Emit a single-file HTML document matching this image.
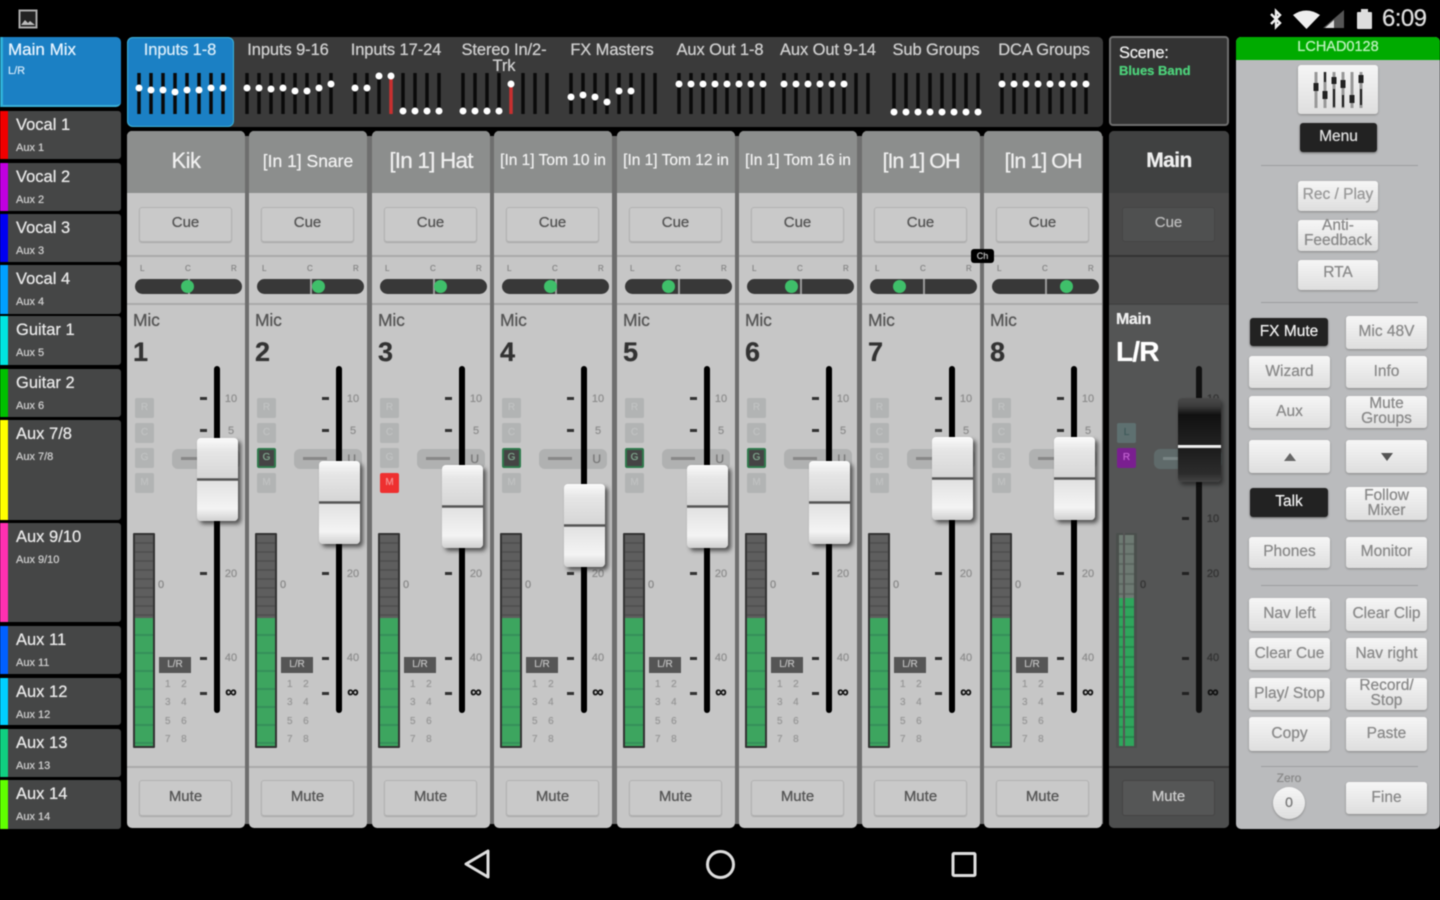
<!DOCTYPE html>
<html><head><meta charset="utf-8"><title>Mixer</title>
<style>
html,body{margin:0;padding:0;background:#000}
#r{position:relative;width:1440px;height:900px;overflow:hidden;background:#000;font-family:"Liberation Sans",sans-serif;filter:blur(.55px);text-shadow:0 0 .7px currentColor}
#r div,#r svg,#r span.a{position:absolute}
.si{left:0;width:121px;background:#454646;border-radius:0 3px 3px 0;overflow:hidden;color:#ddd}
.si i{position:absolute;left:0;top:0;bottom:0;width:8px}
.si b{position:absolute;left:16px;top:4px;font:16.5px/20px "Liberation Sans",sans-serif;color:#e8e8e8;white-space:nowrap}
.si s{position:absolute;left:16px;top:30px;font:11px/14px "Liberation Sans",sans-serif;color:#ccc;text-decoration:none;white-space:nowrap}
.nl{top:42px;width:108px;text-align:center;font-size:16.5px;line-height:16px;color:#cfcfcf;white-space:nowrap;letter-spacing:-.1px}
.ch{top:131px;width:118px;height:697px;background:#c6c6c6;border-radius:5px;overflow:hidden}
.nm{left:0;top:0;width:118px;height:62px;background:#8c8e8d;color:#f0f0f0;text-align:center;line-height:60px;white-space:nowrap}
.big{font-size:22.5px;letter-spacing:-.8px}
.oh{font-size:21.5px;letter-spacing:-1px}
.bt{left:12px;width:93px;height:35px;background:#c9c9c9;border:1px solid #b2b2b2;box-sizing:border-box;border-radius:3px;text-align:center;line-height:30px;font-size:15px;color:#555;box-shadow:0 1px 1px #aaa}
.ln{left:0;width:118px;height:2px;background:#aaa}
.lc{top:133px;font-size:8px;line-height:10px;color:#888}
.pan{left:8px;top:148px;width:107px;height:15px;background:#383838;border-radius:8px}
.dv{left:53px;top:0;width:2px;height:15px;background:#999}
.kn{top:149px;width:13px;height:13px;border-radius:50%;background:#3fbf6a}
.ty{left:6px;top:179px;font-size:17.5px;line-height:20px;color:#555;letter-spacing:-.2px}
.no{left:6px;top:205px;font-size:27px;line-height:32px;color:#333;font-weight:bold}
.tr{left:87px;top:235px;width:6px;height:347px;background:#000;border-radius:3px}
.t{left:73px;width:7px;height:3px;background:#333}
.v{left:94px;width:20px;font-size:11px;line-height:12px;color:#8f8f8f;text-align:center}
.f{top:555px;font-size:16px;line-height:14px;color:#111;font-weight:bold}
.sb{left:8px;width:19px;height:20px;background:#b2b4b4;border-radius:2px;text-align:center;font-size:10px;line-height:20px;color:#c0c2c2}
.gr{top:317px;background:#444;color:#7fa58c;border:2px solid #2f7a4c;box-sizing:border-box;line-height:16px}
.pl{left:45px;top:318px;width:68px;height:20px;background:#b0b1b1;border-radius:6px}
.pl i{position:absolute;left:9px;top:8px;width:24px;height:3px;background:#888}
.pl u{position:absolute;right:6px;top:3px;font-size:12px;line-height:14px;color:#777;text-decoration:none}
.cap{left:70px;width:41px;height:83px;border-radius:4px;background:linear-gradient(#fbfbfb,#e6e6e6 16%,#d6d6d6 48%,#555 49%,#555 51%,#e2e2e2 52%,#f4f4f4 85%,#d0d0d0);box-shadow:3px 3px 4px rgba(0,0,0,.6)}
.mt{left:6px;top:402px;width:22px;height:215px;background:#333;border-radius:1px}
.mt i{position:absolute;left:2px;right:2px;top:2px;height:83px;background:repeating-linear-gradient(#5e5e5e 0,#5e5e5e 7px,#525252 7px,#525252 9px)}
.mt b{position:absolute;left:2px;right:2px;top:85px;bottom:2px;background:repeating-linear-gradient(#3da55f 0,#3da55f 16px,#35905a 16px,#35905a 18px)}
.z{left:31px;top:448px;font-size:11px;line-height:12px;color:#888}
.lr{left:32px;top:526px;width:32px;height:16px;background:#555;color:#bbb;font-size:10px;line-height:16px;text-align:center}
.nn{left:38px;top:545px;width:32px;font-size:10px;line-height:18.3px;color:#999;white-space:pre;word-spacing:2.5px}
.rb{background:linear-gradient(#f6f6f6,#dedede);border-radius:3px;box-shadow:0 1px 2px #888;color:#8a8a8a;font-size:15.5px;line-height:15px;text-align:center;display:flex;align-items:center;justify-content:center;width:81px;box-sizing:border-box;padding-bottom:2px}
.d{background:#222;color:#eee;box-shadow:0 1px 2px #666}
.c2{left:1346px}.c1{left:1249px}
.sp{left:1261px;width:157px;height:1px;background:#9d9ea0}
</style></head><body>
<div id="r">

<!-- status bar -->
<svg style="left:18px;top:9px" width="20" height="20" viewBox="0 0 20 20"><rect x="1.5" y="1.5" width="17" height="17" fill="#222" stroke="#aaa" stroke-width="2"/><path d="M3 16l4-5 3 3 2-2 5 4z" fill="#bbb"/></svg>
<svg style="left:1268px;top:8px" width="170" height="22" viewBox="0 0 170 22"><path d="M3 6l9 9-4 4V3l4 4-9 9" fill="none" stroke="#eee" stroke-width="2.4"/><path d="M25 7q13-9 27 0L38.500 21z" fill="#eee"/><path d="M55 20L76 2v18z" fill="#555"/><path d="M57 20L66 12v8z" fill="#ddd"/><rect x="89" y="4" width="15" height="17" rx="1" fill="#ddd"/><rect x="93" y="1" width="7" height="3" fill="#ddd"/></svg>
<div style="left:1382px;top:5px;font-size:24px;line-height:28px;color:#ddd;letter-spacing:-.6px">6:09</div>

<!-- sidebar -->
<div style="left:0;top:37px;width:121px;height:70px;background:#1b80c4;border-radius:0 5px 5px 0;border-bottom:2px solid #3bb0d8;box-sizing:border-box"></div>
<div style="left:0;top:37px;width:3px;height:70px;background:#2fb0d8"></div>
<div style="left:8px;top:40px;font-size:17px;line-height:20px;color:#e8f4ff">Main Mix</div>
<div style="left:8px;top:64px;font-size:11px;line-height:14px;color:#cfe6f8">L/R</div>
<div class="si" style="top:111px;height:48px"><i style="background:#f00000"></i><b>Vocal 1</b><s>Aux 1</s></div>
<div class="si" style="top:163px;height:48px"><i style="background:#c000e0"></i><b>Vocal 2</b><s>Aux 2</s></div>
<div class="si" style="top:214px;height:48px"><i style="background:#0000f0"></i><b>Vocal 3</b><s>Aux 3</s></div>
<div class="si" style="top:265px;height:49px"><i style="background:#00a0ff"></i><b>Vocal 4</b><s>Aux 4</s></div>
<div class="si" style="top:316px;height:49px"><i style="background:#00e4e0"></i><b>Guitar 1</b><s>Aux 5</s></div>
<div class="si" style="top:369px;height:48px"><i style="background:#00c000"></i><b>Guitar 2</b><s>Aux 6</s></div>
<div class="si" style="top:420px;height:100px"><i style="background:#ffff00"></i><b>Aux 7/8</b><s>Aux 7/8</s></div>
<div class="si" style="top:523px;height:99px"><i style="background:#ff30b0"></i><b>Aux 9/10</b><s>Aux 9/10</s></div>
<div class="si" style="top:626px;height:48px"><i style="background:#0060ff"></i><b>Aux 11</b><s>Aux 11</s></div>
<div class="si" style="top:678px;height:47px"><i style="background:#00d0ff"></i><b>Aux 12</b><s>Aux 12</s></div>
<div class="si" style="top:729px;height:48px"><i style="background:#10d080"></i><b>Aux 13</b><s>Aux 13</s></div>
<div class="si" style="top:780px;height:49px"><i style="background:#60ff00"></i><b>Aux 14</b><s>Aux 14</s></div>

<!-- nav strip -->
<div style="left:127px;top:37px;width:976px;height:90px;background:#3a3a3a;border-radius:5px"></div>
<div style="left:127px;top:37px;width:107px;height:90px;background:#1b80c4;border-radius:6px;border:1px solid #3bb0d8;box-sizing:border-box"></div>
<div class="nl" style="left:126px;color:#d8ecfa">Inputs 1-8</div>
<div class="nl" style="left:234px">Inputs 9-16</div>
<div class="nl" style="left:342px">Inputs 17-24</div>
<div class="nl" style="left:450px">Stereo In/2-<br>Trk</div>
<div class="nl" style="left:558px">FX Masters</div>
<div class="nl" style="left:666px">Aux Out 1-8</div>
<div class="nl" style="left:774px">Aux Out 9-14</div>
<div class="nl" style="left:882px">Sub Groups</div>
<div class="nl" style="left:990px">DCA Groups</div>
<svg style="left:0;top:0" width="1110" height="130" viewBox="0 0 1110 130">
<path stroke="#0a0a0a" stroke-width="3.500" fill="none" d="M139 73v41M151 73v41M163 73v41M175 73v41M187 73v41M199 73v41M211 73v41M223 73v41M247 73v41M259 73v41M271 73v41M283 73v41M295 73v41M307 73v41M319 73v41M331 73v41M355 73v41M367 73v41M379 73v41M403 73v41M415 73v41M427 73v41M439 73v41M463 73v41M475 73v41M487 73v41M499 73v41M523 73v41M535 73v41M547 73v41M571 73v41M583 73v41M595 73v41M607 73v41M619 73v41M631 73v41M643 73v41M655 73v41M679 73v41M691 73v41M703 73v41M715 73v41M727 73v41M739 73v41M751 73v41M763 73v41M784 73v41M796 73v41M808 73v41M820 73v41M832 73v41M844 73v41M856 73v41M868 73v41M894 73v41M906 73v41M918 73v41M930 73v41M942 73v41M954 73v41M966 73v41M978 73v41M1002 73v41M1014 73v41M1026 73v41M1038 73v41M1050 73v41M1062 73v41M1074 73v41M1086 73v41"/>
<path stroke="#c83030" stroke-width="3.500" fill="none" d="M391 76v38M511 84v30"/>
<g fill="#fff">
<circle cx="139" cy="88" r="3.500"/><circle cx="151" cy="90" r="3.500"/><circle cx="163" cy="90" r="3.500"/><circle cx="175" cy="92" r="3.500"/><circle cx="187" cy="90" r="3.500"/><circle cx="199" cy="90" r="3.500"/><circle cx="211" cy="88" r="3.500"/><circle cx="223" cy="88" r="3.500"/>
<circle cx="247" cy="88" r="3.500"/><circle cx="259" cy="88" r="3.500"/><circle cx="271" cy="89" r="3.500"/><circle cx="283" cy="88" r="3.500"/><circle cx="295" cy="91" r="3.500"/><circle cx="307" cy="91" r="3.500"/><circle cx="319" cy="88" r="3.500"/><circle cx="331" cy="84" r="3.500"/>
<circle cx="355" cy="88" r="3.500"/><circle cx="367" cy="88" r="3.500"/><circle cx="379" cy="76" r="3.500"/><circle cx="391" cy="76" r="3.500"/><circle cx="403" cy="111" r="3.500"/><circle cx="415" cy="111" r="3.500"/><circle cx="427" cy="111" r="3.500"/><circle cx="439" cy="111" r="3.500"/>
<circle cx="463" cy="111" r="3.500"/><circle cx="475" cy="111" r="3.500"/><circle cx="487" cy="111" r="3.500"/><circle cx="499" cy="111" r="3.500"/><circle cx="511" cy="84" r="3.500"/>
<circle cx="571" cy="97" r="3.500"/><circle cx="583" cy="95" r="3.500"/><circle cx="595" cy="97" r="3.500"/><circle cx="607" cy="102" r="3.500"/><circle cx="619" cy="91" r="3.500"/><circle cx="631" cy="91" r="3.500"/>
<circle cx="679" cy="84" r="3.500"/><circle cx="691" cy="84" r="3.500"/><circle cx="703" cy="84" r="3.500"/><circle cx="715" cy="84" r="3.500"/><circle cx="727" cy="84" r="3.500"/><circle cx="739" cy="84" r="3.500"/><circle cx="751" cy="84" r="3.500"/><circle cx="763" cy="84" r="3.500"/>
<circle cx="784" cy="84" r="3.500"/><circle cx="796" cy="84" r="3.500"/><circle cx="808" cy="84" r="3.500"/><circle cx="820" cy="84" r="3.500"/><circle cx="832" cy="84" r="3.500"/><circle cx="844" cy="84" r="3.500"/>
<circle cx="894" cy="112" r="3.500"/><circle cx="906" cy="112" r="3.500"/><circle cx="918" cy="112" r="3.500"/><circle cx="930" cy="112" r="3.500"/><circle cx="942" cy="112" r="3.500"/><circle cx="954" cy="112" r="3.500"/><circle cx="966" cy="112" r="3.500"/><circle cx="978" cy="112" r="3.500"/>
<circle cx="1002" cy="84" r="3.500"/><circle cx="1014" cy="84" r="3.500"/><circle cx="1026" cy="84" r="3.500"/><circle cx="1038" cy="84" r="3.500"/><circle cx="1050" cy="84" r="3.500"/><circle cx="1062" cy="84" r="3.500"/><circle cx="1074" cy="84" r="3.500"/><circle cx="1086" cy="84" r="3.500"/>
</g></svg>

<!-- scene -->
<div style="left:1109px;top:36px;width:120px;height:90px;background:#333;border:2px solid #6e6e6e;border-radius:4px;box-sizing:border-box"></div>
<div style="left:1119px;top:44px;font-size:16.5px;line-height:18px;color:#eee;letter-spacing:-.3px">Scene:</div>
<div style="left:1119px;top:64px;font-size:13px;line-height:14px;font-weight:bold;color:#4dd07a">Blues Band</div>

<!-- divider between strips -->
<div style="left:245px;top:136px;width:858px;height:688px;background:#6e6e6e"></div>

<!-- channel 1 -->
<div class="ch" style="left:127px">
<div class="nm" style="font-size:22px;letter-spacing:-.5px">Kik</div><div class="bt" style="top:76px">Cue</div><div class="ln" style="top:124px"></div><div class="ln" style="top:172px"></div>
<div class="lc" style="left:13px">L</div><div class="lc" style="left:58px">C</div><div class="lc" style="left:104px">R</div>
<div class="pan"><div class="dv"></div></div><div class="kn" style="left:54px"></div>
<div class="ty">Mic</div><div class="no">1</div>
<div class="sb" style="top:267px">R</div><div class="sb" style="top:292px">C</div><div class="sb" style="top:317px">G</div><div class="sb" style="top:342px">M</div>
<div class="pl"><i></i><u>U</u></div><div class="tr"></div>
<div class="t" style="top:266px"></div><div class="t" style="top:298px"></div><div class="t" style="top:441px"></div><div class="t" style="top:526px"></div><div class="t" style="top:561px"></div>
<div class="v" style="top:262px">10</div><div class="v" style="top:294px">5</div><div class="v" style="top:437px">20</div><div class="v" style="top:521px">40</div><div class="v f">∞</div>
<div class="cap" style="top:307px"></div>
<div class="mt"><i></i><b></b></div><div class="z">0</div><div class="lr">L/R</div><div class="nn">1  2
3  4
5  6
7  8</div>
<div class="ln" style="top:635px"></div><div class="bt" style="top:649px;height:36px;line-height:32px">Mute</div>
</div>

<!-- channel 2 -->
<div class="ch" style="left:249px">
<div class="nm" style="font-size:17.500px">[In 1] Snare</div><div class="bt" style="top:76px">Cue</div><div class="ln" style="top:124px"></div><div class="ln" style="top:172px"></div>
<div class="lc" style="left:13px">L</div><div class="lc" style="left:58px">C</div><div class="lc" style="left:104px">R</div>
<div class="pan"><div class="dv"></div></div><div class="kn" style="left:63px"></div>
<div class="ty">Mic</div><div class="no">2</div>
<div class="sb" style="top:267px">R</div><div class="sb" style="top:292px">C</div><div class="sb gr">G</div><div class="sb" style="top:342px">M</div>
<div class="pl"><i></i><u>U</u></div><div class="tr"></div>
<div class="t" style="top:266px"></div><div class="t" style="top:298px"></div><div class="t" style="top:441px"></div><div class="t" style="top:526px"></div><div class="t" style="top:561px"></div>
<div class="v" style="top:262px">10</div><div class="v" style="top:294px">5</div><div class="v" style="top:437px">20</div><div class="v" style="top:521px">40</div><div class="v f">∞</div>
<div class="cap" style="top:330px"></div>
<div class="mt"><i></i><b></b></div><div class="z">0</div><div class="lr">L/R</div><div class="nn">1  2
3  4
5  6
7  8</div>
<div class="ln" style="top:635px"></div><div class="bt" style="top:649px;height:36px;line-height:32px">Mute</div>
</div>

<!-- channel 3 -->
<div class="ch" style="left:372px">
<div class="nm big">[In 1] Hat</div><div class="bt" style="top:76px">Cue</div><div class="ln" style="top:124px"></div><div class="ln" style="top:172px"></div>
<div class="lc" style="left:13px">L</div><div class="lc" style="left:58px">C</div><div class="lc" style="left:104px">R</div>
<div class="pan"><div class="dv"></div></div><div class="kn" style="left:62px"></div>
<div class="ty">Mic</div><div class="no">3</div>
<div class="sb" style="top:267px">R</div><div class="sb" style="top:292px">C</div><div class="sb" style="top:317px">G</div><div class="sb" style="top:342px;background:#ee3030;color:#f59090">M</div>
<div class="pl"><i></i><u>U</u></div><div class="tr"></div>
<div class="t" style="top:266px"></div><div class="t" style="top:298px"></div><div class="t" style="top:441px"></div><div class="t" style="top:526px"></div><div class="t" style="top:561px"></div>
<div class="v" style="top:262px">10</div><div class="v" style="top:294px">5</div><div class="v" style="top:437px">20</div><div class="v" style="top:521px">40</div><div class="v f">∞</div>
<div class="cap" style="top:334px"></div>
<div class="mt"><i></i><b></b></div><div class="z">0</div><div class="lr">L/R</div><div class="nn">1  2
3  4
5  6
7  8</div>
<div class="ln" style="top:635px"></div><div class="bt" style="top:649px;height:36px;line-height:32px">Mute</div>
</div>

<!-- channel 4 -->
<div class="ch" style="left:494px">
<div class="nm" style="font-size:15.500px">[In 1] Tom 10 in</div><div class="bt" style="top:76px">Cue</div><div class="ln" style="top:124px"></div><div class="ln" style="top:172px"></div>
<div class="lc" style="left:13px">L</div><div class="lc" style="left:58px">C</div><div class="lc" style="left:104px">R</div>
<div class="pan"><div class="dv"></div></div><div class="kn" style="left:50px"></div>
<div class="ty">Mic</div><div class="no">4</div>
<div class="sb" style="top:267px">R</div><div class="sb" style="top:292px">C</div><div class="sb gr">G</div><div class="sb" style="top:342px">M</div>
<div class="pl"><i></i><u>U</u></div><div class="tr"></div>
<div class="t" style="top:266px"></div><div class="t" style="top:298px"></div><div class="t" style="top:441px"></div><div class="t" style="top:526px"></div><div class="t" style="top:561px"></div>
<div class="v" style="top:262px">10</div><div class="v" style="top:294px">5</div><div class="v" style="top:437px">20</div><div class="v" style="top:521px">40</div><div class="v f">∞</div>
<div class="cap" style="top:353px"></div>
<div class="mt"><i></i><b></b></div><div class="z">0</div><div class="lr">L/R</div><div class="nn">1  2
3  4
5  6
7  8</div>
<div class="ln" style="top:635px"></div><div class="bt" style="top:649px;height:36px;line-height:32px">Mute</div>
</div>

<!-- channel 5 -->
<div class="ch" style="left:617px">
<div class="nm" style="font-size:15.500px">[In 1] Tom 12 in</div><div class="bt" style="top:76px">Cue</div><div class="ln" style="top:124px"></div><div class="ln" style="top:172px"></div>
<div class="lc" style="left:13px">L</div><div class="lc" style="left:58px">C</div><div class="lc" style="left:104px">R</div>
<div class="pan"><div class="dv"></div></div><div class="kn" style="left:45px"></div>
<div class="ty">Mic</div><div class="no">5</div>
<div class="sb" style="top:267px">R</div><div class="sb" style="top:292px">C</div><div class="sb gr">G</div><div class="sb" style="top:342px">M</div>
<div class="pl"><i></i><u>U</u></div><div class="tr"></div>
<div class="t" style="top:266px"></div><div class="t" style="top:298px"></div><div class="t" style="top:441px"></div><div class="t" style="top:526px"></div><div class="t" style="top:561px"></div>
<div class="v" style="top:262px">10</div><div class="v" style="top:294px">5</div><div class="v" style="top:437px">20</div><div class="v" style="top:521px">40</div><div class="v f">∞</div>
<div class="cap" style="top:334px"></div>
<div class="mt"><i></i><b></b></div><div class="z">0</div><div class="lr">L/R</div><div class="nn">1  2
3  4
5  6
7  8</div>
<div class="ln" style="top:635px"></div><div class="bt" style="top:649px;height:36px;line-height:32px">Mute</div>
</div>

<!-- channel 6 -->
<div class="ch" style="left:739px">
<div class="nm" style="font-size:15.500px">[In 1] Tom 16 in</div><div class="bt" style="top:76px">Cue</div><div class="ln" style="top:124px"></div><div class="ln" style="top:172px"></div>
<div class="lc" style="left:13px">L</div><div class="lc" style="left:58px">C</div><div class="lc" style="left:104px">R</div>
<div class="pan"><div class="dv"></div></div><div class="kn" style="left:46px"></div>
<div class="ty">Mic</div><div class="no">6</div>
<div class="sb" style="top:267px">R</div><div class="sb" style="top:292px">C</div><div class="sb gr">G</div><div class="sb" style="top:342px">M</div>
<div class="pl"><i></i><u>U</u></div><div class="tr"></div>
<div class="t" style="top:266px"></div><div class="t" style="top:298px"></div><div class="t" style="top:441px"></div><div class="t" style="top:526px"></div><div class="t" style="top:561px"></div>
<div class="v" style="top:262px">10</div><div class="v" style="top:294px">5</div><div class="v" style="top:437px">20</div><div class="v" style="top:521px">40</div><div class="v f">∞</div>
<div class="cap" style="top:330px"></div>
<div class="mt"><i></i><b></b></div><div class="z">0</div><div class="lr">L/R</div><div class="nn">1  2
3  4
5  6
7  8</div>
<div class="ln" style="top:635px"></div><div class="bt" style="top:649px;height:36px;line-height:32px">Mute</div>
</div>

<!-- channel 7 -->
<div class="ch" style="left:862px">
<div class="nm oh">[In 1] OH</div><div class="bt" style="top:76px">Cue</div><div class="ln" style="top:124px"></div><div class="ln" style="top:172px"></div>
<div class="lc" style="left:13px">L</div><div class="lc" style="left:58px">C</div><div class="lc" style="left:104px">R</div>
<div class="pan"><div class="dv"></div></div><div class="kn" style="left:31px"></div>
<div class="ty">Mic</div><div class="no">7</div>
<div class="sb" style="top:267px">R</div><div class="sb" style="top:292px">C</div><div class="sb" style="top:317px">G</div><div class="sb" style="top:342px">M</div>
<div class="pl"><i></i><u>U</u></div><div class="tr"></div>
<div class="t" style="top:266px"></div><div class="t" style="top:298px"></div><div class="t" style="top:441px"></div><div class="t" style="top:526px"></div><div class="t" style="top:561px"></div>
<div class="v" style="top:262px">10</div><div class="v" style="top:294px">5</div><div class="v" style="top:437px">20</div><div class="v" style="top:521px">40</div><div class="v f">∞</div>
<div class="cap" style="top:306px"></div>
<div class="mt"><i></i><b></b></div><div class="z">0</div><div class="lr">L/R</div><div class="nn">1  2
3  4
5  6
7  8</div>
<div class="ln" style="top:635px"></div><div class="bt" style="top:649px;height:36px;line-height:32px">Mute</div>
</div>

<!-- channel 8 -->
<div class="ch" style="left:984px">
<div class="nm oh">[In 1] OH</div><div class="bt" style="top:76px">Cue</div><div class="ln" style="top:124px"></div><div class="ln" style="top:172px"></div>
<div class="lc" style="left:13px">L</div><div class="lc" style="left:58px">C</div><div class="lc" style="left:104px">R</div>
<div class="pan"><div class="dv"></div></div><div class="kn" style="left:76px"></div>
<div class="ty">Mic</div><div class="no">8</div>
<div class="sb" style="top:267px">R</div><div class="sb" style="top:292px">C</div><div class="sb" style="top:317px">G</div><div class="sb" style="top:342px">M</div>
<div class="pl"><i></i><u>U</u></div><div class="tr"></div>
<div class="t" style="top:266px"></div><div class="t" style="top:298px"></div><div class="t" style="top:441px"></div><div class="t" style="top:526px"></div><div class="t" style="top:561px"></div>
<div class="v" style="top:262px">10</div><div class="v" style="top:294px">5</div><div class="v" style="top:437px">20</div><div class="v" style="top:521px">40</div><div class="v f">∞</div>
<div class="cap" style="top:306px"></div>
<div class="mt"><i></i><b></b></div><div class="z">0</div><div class="lr">L/R</div><div class="nn">1  2
3  4
5  6
7  8</div>
<div class="ln" style="top:635px"></div><div class="bt" style="top:649px;height:36px;line-height:32px">Mute</div>
</div>

<!-- tooltip -->
<div style="left:971px;top:249px;width:23px;height:14px;background:#000;border-radius:3px;color:#bbb;font-size:9px;line-height:14px;text-align:center">Ch</div>

<!-- main channel -->
<div class="ch" style="left:1109px;width:120px;background:#545555">
<div class="nm" style="width:120px;background:#404141;font-size:21px;font-weight:bold;letter-spacing:-.6px;color:#eee;line-height:60px">Main</div>
<div style="left:0;top:62px;width:120px;height:62px;background:#4a4a4a"></div>
<div style="left:0;top:124px;width:120px;height:2px;background:#333"></div>
<div style="left:0;top:126px;width:120px;height:46px;background:#484848"></div>
<div style="left:0;top:172px;width:120px;height:2px;background:#444"></div>
<div class="bt" style="left:13px;top:76px;width:93px;background:#4f5050;border-color:#454545;color:#bbb;box-shadow:none">Cue</div>
<div class="ty" style="left:7px;color:#eee;font-size:16px;font-weight:bold;letter-spacing:-.4px">Main</div>
<div class="no" style="left:7px;color:#fff;font-size:28px;letter-spacing:-.8px">L/R</div>
<div class="sb" style="top:292px;background:#5e7070;color:#3f5a5a">L</div>
<div class="sb" style="top:317px;background:#7a1f90;color:#c060d0">R</div>
<div class="pl" style="background:#5f6a6a"><i style="background:#7a8585"></i></div>
<div class="tr" style="left:87px;background:#111"></div>
<div class="t" style="top:386px;background:#222"></div><div class="t" style="top:441px;background:#222"></div><div class="t" style="top:526px;background:#222"></div><div class="t" style="top:561px;background:#222"></div>
<div class="v" style="top:262px;color:#333">10</div><div class="v" style="top:382px;color:#333">10</div><div class="v" style="top:437px;color:#333">20</div><div class="v" style="top:521px;color:#333">40</div><div class="v f">∞</div>
<div class="cap" style="left:69px;top:267px;width:43px;height:84px;background:linear-gradient(#4a4a4a,#3a3a3a 10%,#111 20%,#222 56%,#f0f0f0 56%,#f0f0f0 59%,#1c1c1c 60%,#2c2c2c 90%,#444);box-shadow:2px 3px 4px rgba(0,0,0,.45)"></div>
<div class="mt" style="left:7px;width:21px;background:#4a4f4c">
<i style="height:63px;left:3px;right:3px;background:repeating-linear-gradient(#6d7a72 0,#6d7a72 8px,#5d6862 8px,#5d6862 10px)"></i>
<b style="top:65px;left:3px;right:3px;background:repeating-linear-gradient(#2fa65c 0,#2fa65c 8px,#268a4e 8px,#268a4e 10px)"></b>
</div>
<div style="left:14px;top:402px;width:2px;height:213px;background:#555"></div>
<div class="z" style="color:#333">0</div>
<div style="left:0;top:635px;width:120px;height:2px;background:#333"></div>
<div style="left:0;top:637px;width:120px;height:60px;background:#4d4e4e"></div>
<div class="bt" style="left:13px;top:649px;height:36px;line-height:32px;width:93px;background:#555656;border-color:#454545;color:#ccc;box-shadow:none">Mute</div>
</div>

<!-- right panel -->
<div style="left:1236px;top:37px;width:204px;height:792px;background:#babbbd;border-radius:5px"></div>
<div style="left:1236px;top:37px;width:204px;height:23px;background:#00ab00;border-radius:5px 5px 0 0;color:#bdf2bd;font-size:14.500px;line-height:21px;text-align:center">LCHAD0128</div>

<div class="rb" style="left:1298px;top:65px;width:80px;height:49px"></div>
<svg style="left:1298px;top:65px" width="80" height="49" viewBox="0 0 80 49">
<path stroke="#999" stroke-width="3" d="M18 7v36M27 7v36M36 7v36M45 7v36M54 7v36M63 7v36"/>
<path stroke="#222" stroke-width="5" d="M18 18v8M27 26v8M36 12v7M45 15v8M54 30v8M63 10v8"/>
<path stroke="#222" stroke-width="2" d="M27 7v10M36 24v18M45 30v12M63 24v16"/>
</svg>
<div class="rb d" style="left:1300px;top:123px;width:77px;height:29px;color:#ddd">Menu</div>
<div class="sp" style="top:165px"></div>
<div class="rb" style="left:1298px;top:181px;width:80px;height:30px;color:#999;padding-bottom:4px">Rec / Play</div>
<div class="rb" style="left:1298px;top:220px;width:80px;height:31px;padding-bottom:5px">Anti-<br>Feedback</div>
<div class="rb" style="left:1298px;top:260px;width:80px;height:30px;padding-bottom:5px">RTA</div>
<div class="sp" style="top:302px"></div>

<div class="rb d c1" style="left:1250px;top:318px;width:78px;height:28px">FX Mute</div>
<div class="rb c2" style="top:316px;height:33px">Mic 48V</div>
<div class="rb c1" style="top:356px;height:32px">Wizard</div>
<div class="rb c2" style="top:356px;height:32px">Info</div>
<div class="rb c1" style="top:396px;height:32px">Aux</div>
<div class="rb c2" style="top:396px;height:32px">Mute<br>Groups</div>
<div class="rb c1" style="top:440px;height:33px"></div>
<div class="rb c2" style="top:440px;height:33px"></div>
<svg style="left:1280px;top:450px" width="120" height="14" viewBox="0 0 120 14"><path d="M4 11L10 3l6 8z" fill="#666"/><path d="M101 3h12l-6 8z" fill="#555"/></svg>
<div class="rb d c1" style="left:1250px;top:488px;width:78px;height:29px">Talk</div>
<div class="rb c2" style="top:487px;height:33px">Follow<br>Mixer</div>
<div class="rb c1" style="top:537px;height:31px">Phones</div>
<div class="rb c2" style="top:537px;height:31px">Monitor</div>
<div class="sp" style="top:585px"></div>
<div class="rb c1" style="top:598px;height:33px">Nav left</div>
<div class="rb c2" style="top:598px;height:33px">Clear Clip</div>
<div class="rb c1" style="top:638px;height:32px">Clear Cue</div>
<div class="rb c2" style="top:638px;height:32px">Nav right</div>
<div class="rb c1" style="top:678px;height:32px">Play/ Stop</div>
<div class="rb c2" style="top:678px;height:32px">Record/<br>Stop</div>
<div class="rb c1" style="top:717px;height:34px">Copy</div>
<div class="rb c2" style="top:717px;height:34px">Paste</div>
<div class="sp" style="top:766px"></div>
<div style="left:1269px;top:771px;width:40px;text-align:center;font-size:12px;line-height:14px;color:#8a8a8a">Zero</div>
<div class="rb" style="left:1273px;top:787px;width:32px;height:32px;border-radius:50%;color:#777;font-size:14px">0</div>
<div class="rb c2" style="top:782px;height:32px">Fine</div>

<!-- android nav -->
<svg style="left:440px;top:840px" width="560" height="50" viewBox="0 0 560 50">
<path d="M26 24L48 11v26z" fill="none" stroke="#ddd" stroke-width="3" stroke-linejoin="round"/>
<circle cx="280.500" cy="24.500" r="13" fill="none" stroke="#ddd" stroke-width="3"/>
<rect x="513" y="13.500" width="22" height="22" rx="1" fill="none" stroke="#ddd" stroke-width="3"/>
</svg>
</div>
</body></html>
